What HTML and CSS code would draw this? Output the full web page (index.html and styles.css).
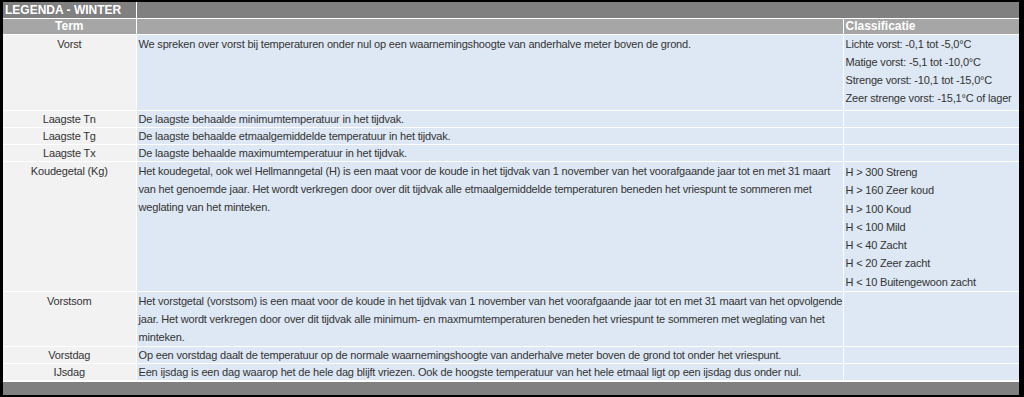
FILE: index.html
```html
<!DOCTYPE html>
<html>
<head>
<meta charset="utf-8">
<link rel="stylesheet" href="styles.css">
</head>
<body>
<div class="frame">
<table class="legend">
  <colgroup><col class="c1"><col class="c2"><col class="c3"></colgroup>
  <tr class="title"><td>LEGENDA - WINTER</td><td colspan="2"></td></tr>
  <tr class="head"><td class="center">Term</td><td></td><td>Classificatie</td></tr>
  <tr class="multi vorst">
    <td class="term">Vorst</td>
    <td class="desc">We spreken over vorst bij temperaturen onder nul op een waarnemingshoogte van anderhalve meter boven de grond.</td>
    <td class="desc">Lichte vorst: -0,1 tot -5,0°C<br>Matige vorst: -5,1 tot -10,0°C<br>Strenge vorst: -10,1 tot -15,0°C<br>Zeer strenge vorst: -15,1°C of lager</td>
  </tr>
  <tr class="single"><td class="term">Laagste Tn</td><td class="desc">De laagste behaalde minimumtemperatuur in het tijdvak.</td><td class="desc"></td></tr>
  <tr class="single"><td class="term">Laagste Tg</td><td class="desc">De laagste behaalde etmaalgemiddelde temperatuur in het tijdvak.</td><td class="desc"></td></tr>
  <tr class="single"><td class="term">Laagste Tx</td><td class="desc">De laagste behaalde maximumtemperatuur in het tijdvak.</td><td class="desc"></td></tr>
  <tr class="multi koude">
    <td class="term">Koudegetal (Kg)</td>
    <td class="desc">Het koudegetal, ook wel Hellmanngetal (H) is een maat voor de koude in het tijdvak van 1 november van het voorafgaande jaar tot en met 31 maart van het genoemde jaar. Het wordt verkregen door over dit tijdvak alle etmaalgemiddelde temperaturen beneden het vriespunt te sommeren met weglating van het minteken.</td>
    <td class="desc cls">H &gt; 300 Streng<br>H &gt; 160 Zeer koud<br>H &gt; 100 Koud<br>H &lt; 100 Mild<br>H &lt; 40 Zacht<br>H &lt; 20 Zeer zacht<br>H &lt; 10 Buitengewoon zacht</td>
  </tr>
  <tr class="multi som">
    <td class="term">Vorstsom</td>
    <td class="desc">Het vorstgetal (vorstsom) is een maat voor de koude in het tijdvak van 1 november van het voorafgaande jaar tot en met 31 maart van het opvolgende jaar. Het wordt verkregen door over dit tijdvak alle minimum- en maxmumtemperaturen beneden het vriespunt te sommeren met weglating van het minteken.</td>
    <td class="desc"></td>
  </tr>
  <tr class="single"><td class="term">Vorstdag</td><td class="desc">Op een vorstdag daalt de temperatuur op de normale waarnemingshoogte van anderhalve meter boven de grond tot onder het vriespunt.</td><td class="desc"></td></tr>
  <tr class="single"><td class="term">IJsdag</td><td class="desc">Een ijsdag is een dag waarop het de hele dag blijft vriezen. Ook de hoogste temperatuur van het hele etmaal ligt op een ijsdag dus onder nul.</td><td class="desc"></td></tr>
  <tr class="foot"><td colspan="3"></td></tr>
</table>
</div>
</body>
</html>
```

FILE: styles.css
```css
html, body {
  margin: 0;
  padding: 0;
  background: #000;
}

.frame {
  padding: 2px 5px 3px 3px;
  height: 397px;
  box-sizing: border-box;
}

.legend {
  width: 1016px;
  border-collapse: collapse;
  border-style: hidden;
  table-layout: fixed;
  font-family: "Liberation Sans", Arial, sans-serif;
  font-size: 11px;
  color: #333;
  letter-spacing: -0.18px;
}

.c1 { width: 133px; }
.c2 { width: 707px; }
.c3 { width: 176px; }

.legend td {
  border: 1px solid #fff;
  padding: 0 2px;
  vertical-align: top;
  line-height: 16px;
}

.legend td.desc {
  padding-right: 0;
}

.title td {
  background: #808080;
  color: #fff;
  font-weight: bold;
  font-size: 12px;
  letter-spacing: 0;
  height: 16px;
  line-height: 16px;
}

.head td {
  background: #a6a6a6;
  color: #fff;
  font-weight: bold;
  font-size: 12px;
  letter-spacing: 0;
  height: 14px;
  line-height: 15px;
}

.center { text-align: center; }

.term {
  background: #f2f2f2;
  text-align: center;
}

.desc {
  background: #dde8f4;
}

.multi td {
  line-height: 18px;
}

.multi .cls {
  line-height: 18.3px;
  padding-top: 1px;
}

.vorst td { height: 75px; }
.koude td { height: 126px; }
.som td { height: 54px; }

.single td { height: 15px; }

.foot td {
  background: #808080;
  height: 13px;
  border-top: 2px solid #fff;
}
```
